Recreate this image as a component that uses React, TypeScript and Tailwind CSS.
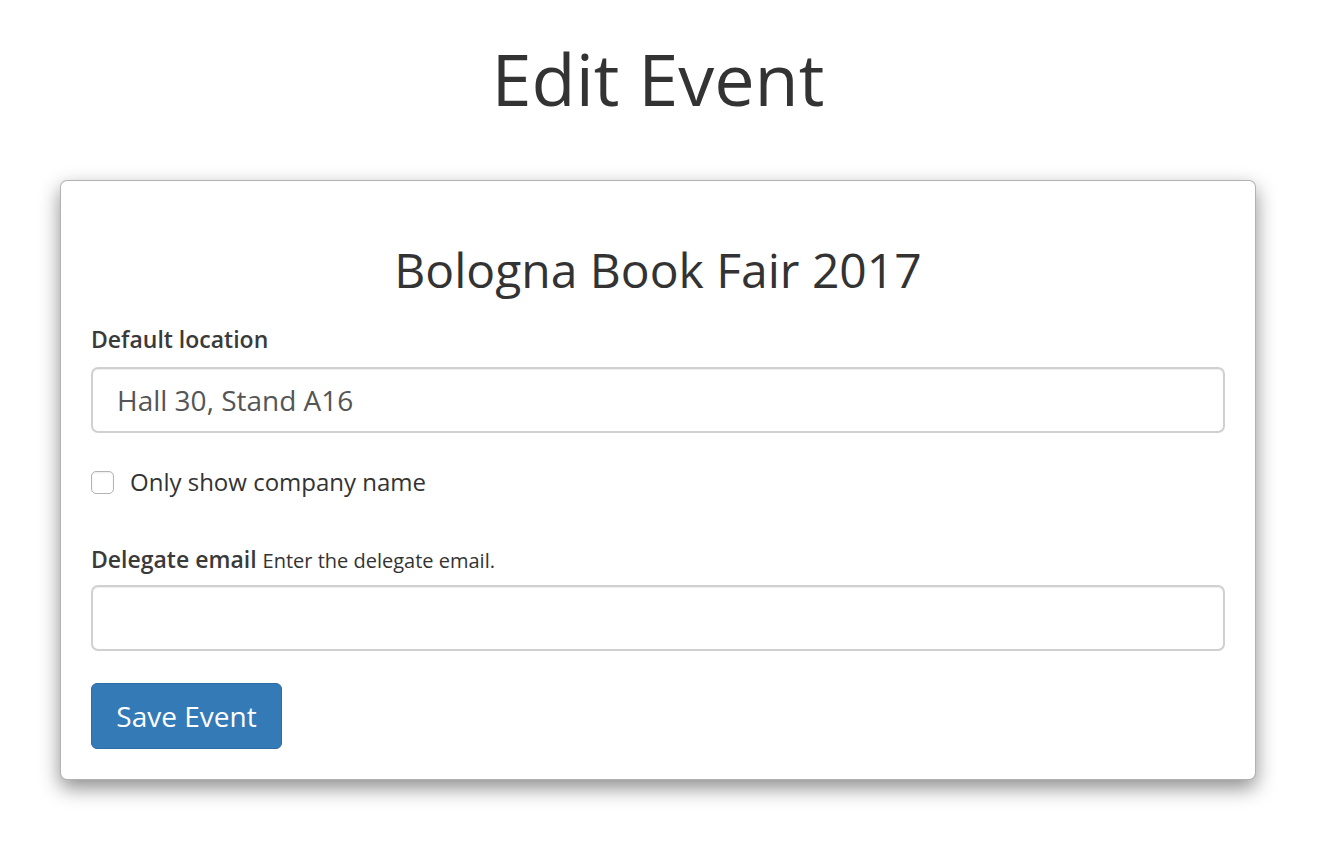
export default function App() {
  return (
    <div className="w-[1316px] min-h-[854px] bg-white text-[#333] [font-family:'Open_Sans',sans-serif]">
      <h1 className="pt-[38px] text-center text-[72px] leading-[80px] font-normal">Edit Event</h1>

      <div className="mx-[60px] mt-[62px] rounded-[7px] border border-black/30 bg-white px-[30px] pt-[63px] pb-[30px] shadow-[0_8px_20px_rgba(0,0,0,0.45)]">
        <h2 className="text-center text-[48px] leading-[52px] font-normal">Bologna Book Fair 2017</h2>

        <form className="mt-[28px]" onSubmit={(e) => e.preventDefault()}>
          <label className="block text-[23px] leading-[30px] font-semibold text-[#3a3a3a]">Default location</label>
          <input
            type="text"
            defaultValue="Hall 30, Stand A16"
            className="mt-[13px] block h-[66px] w-full rounded-[7px] border-2 border-[#d0d0d0] px-[24px] text-[28px] text-[#555] shadow-[inset_0_1px_1px_rgba(0,0,0,0.075)] outline-none"
          />

          <label className="mt-[34px] flex items-center gap-[16px] text-[24px] leading-[30px]">
            <span className="h-[23px] w-[23px] rounded-[5px] border border-[#b3b3b3] bg-white shadow-[inset_0_1px_2px_rgba(0,0,0,0.08)]" />
            Only show company name
          </label>

          <div className="mt-[47px] text-[23px] leading-[30px]">
            <span className="font-semibold text-[#3a3a3a]">Delegate email</span>{" "}
            <span className="text-[20px]">Enter the delegate email.</span>
          </div>
          <input
            type="email"
            className="mt-[9px] block h-[66px] w-full rounded-[7px] border-2 border-[#d0d0d0] px-[24px] text-[28px] text-[#555] shadow-[inset_0_1px_1px_rgba(0,0,0,0.075)] outline-none"
          />

          <button
            type="submit"
            className="mt-[32px] h-[66px] w-[191px] rounded-[6px] border border-[#2e6da4] bg-[#337ab7] text-[28px] text-white"
          >
            Save Event
          </button>
        </form>
      </div>
    </div>
  );
}
